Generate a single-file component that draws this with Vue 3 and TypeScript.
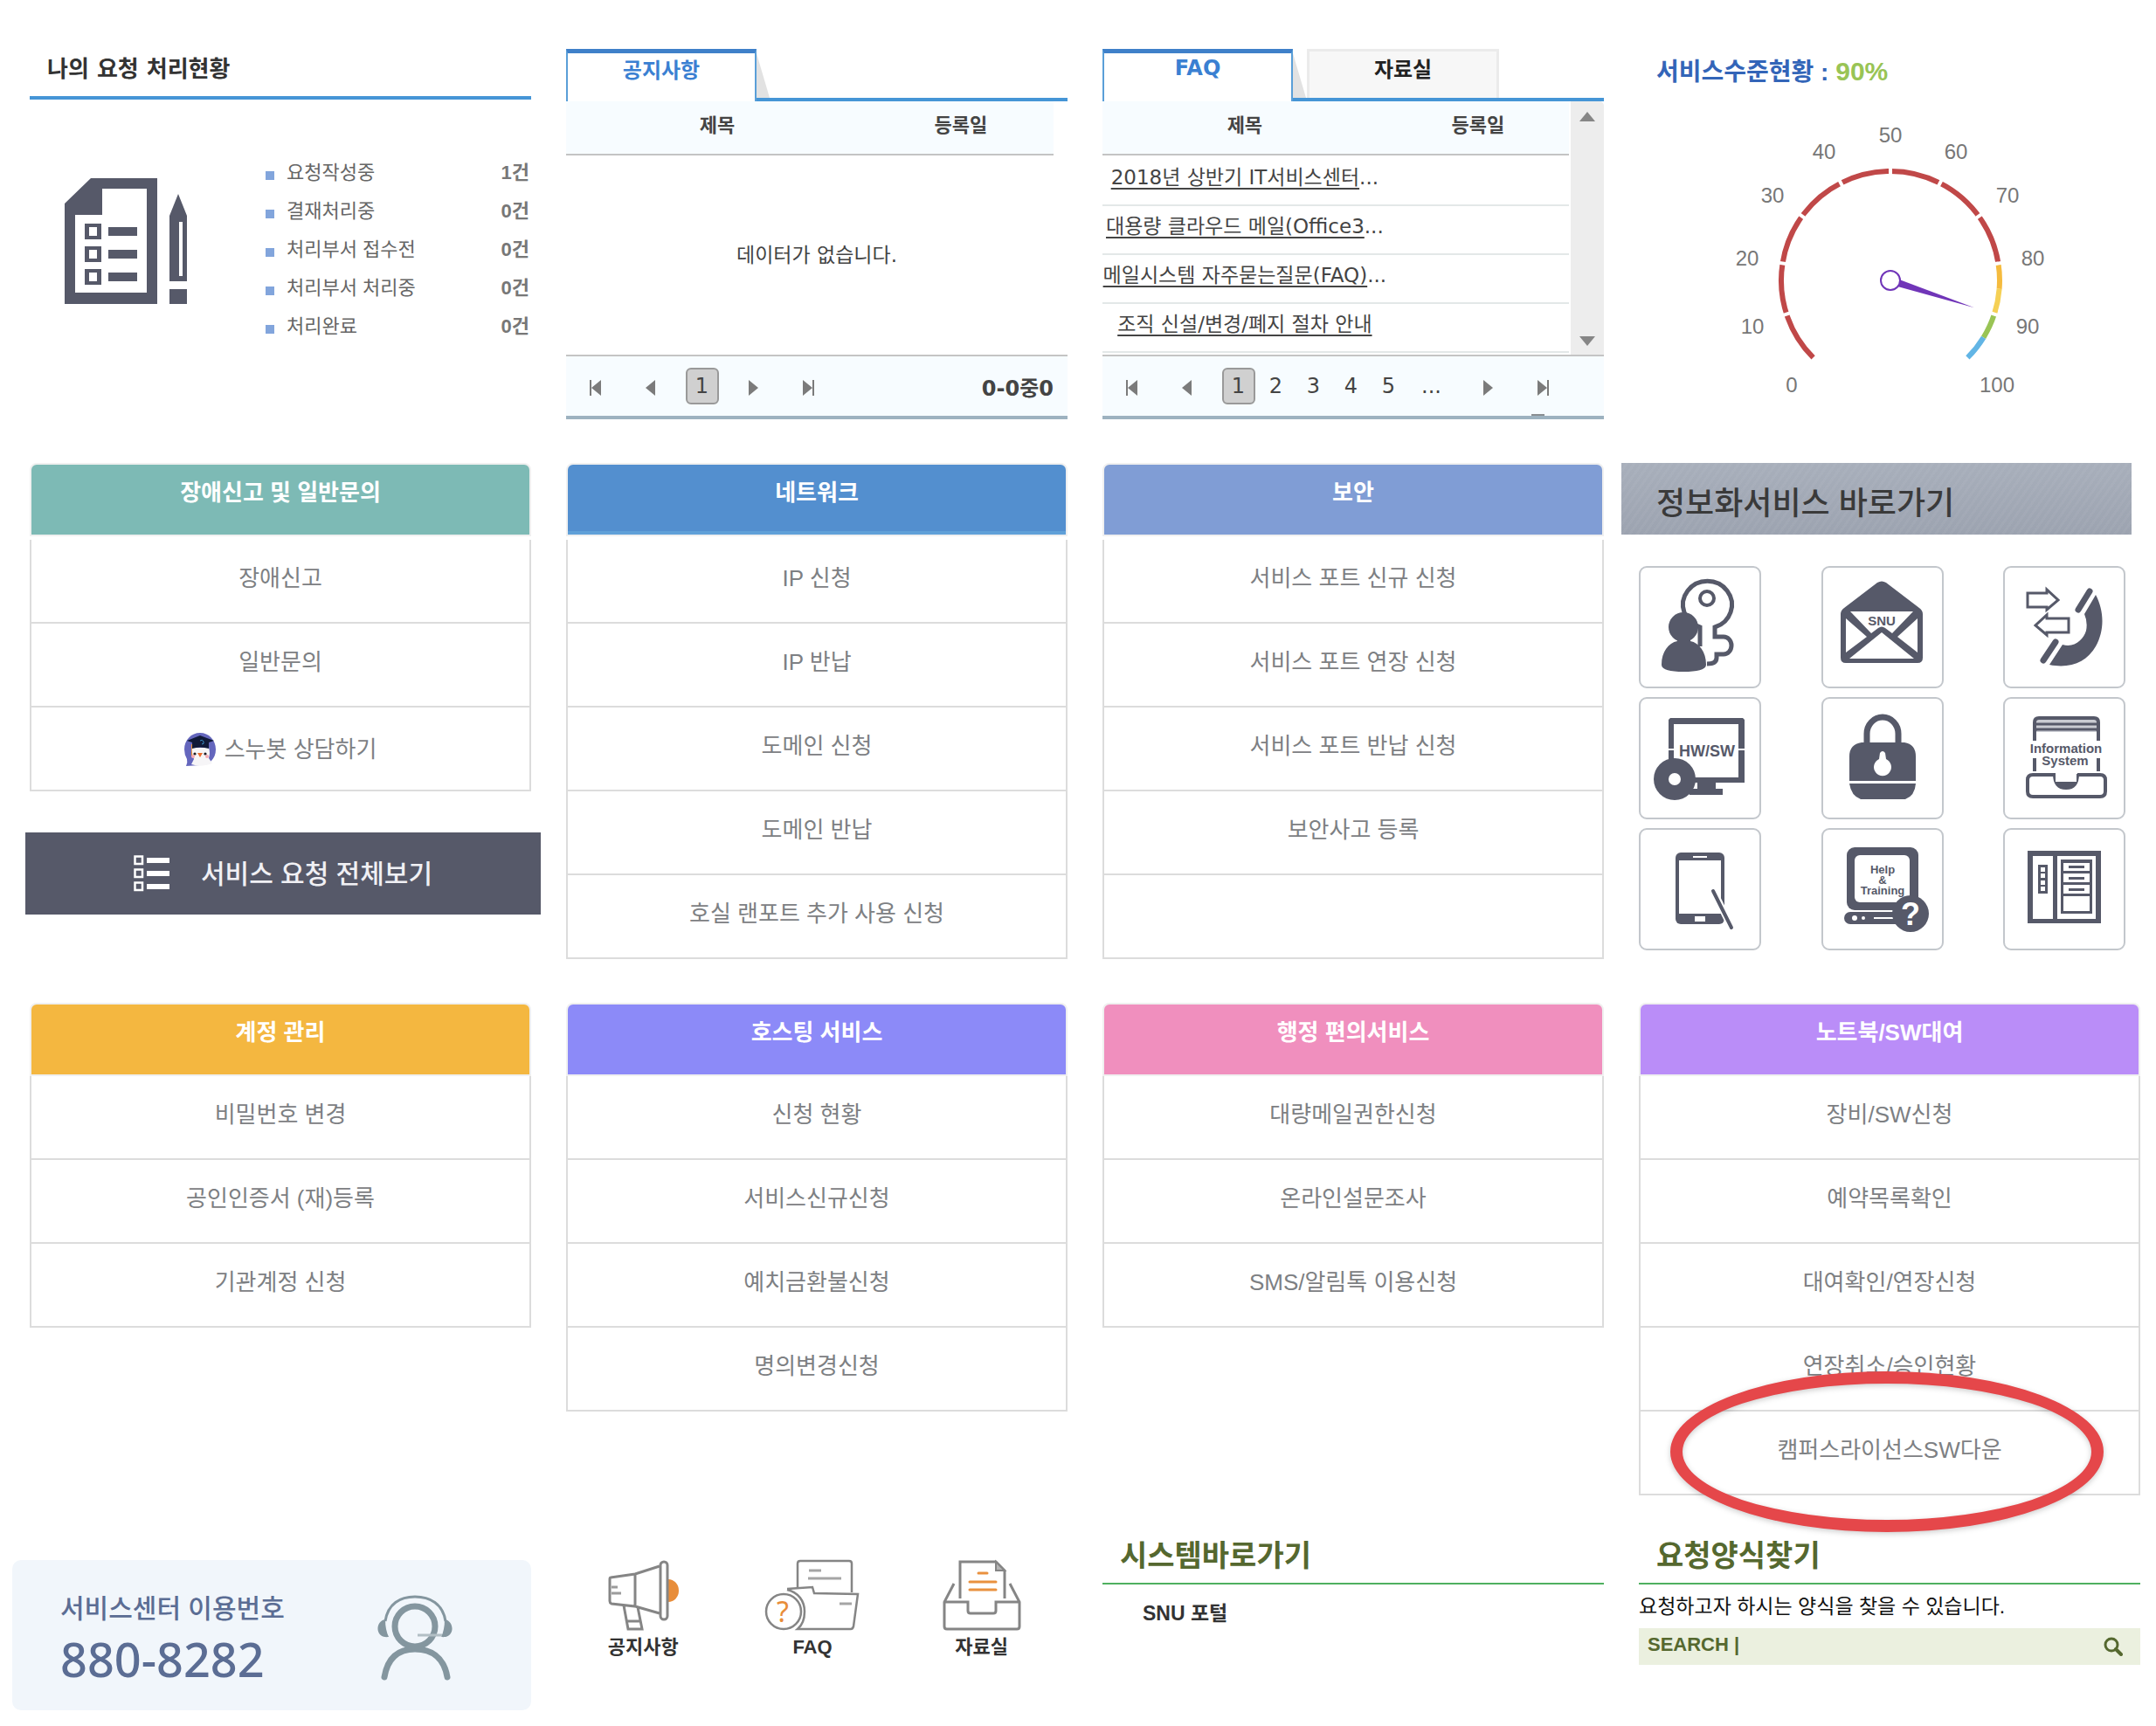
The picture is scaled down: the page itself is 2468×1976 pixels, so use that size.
<script setup lang="ts">
import { ref } from 'vue'

interface MenuItem {
  label: string
  bot?: boolean
  marked?: boolean
}

interface MenuCard {
  title: string
  tone: string
  items: MenuItem[]
}

const toItems = (...labels: string[]): MenuItem[] => labels.map((label) => ({ label }))

const requestStatus = [
  { label: '요청작성중', count: 1 },
  { label: '결재처리중', count: 0 },
  { label: '처리부서 접수전', count: 0 },
  { label: '처리부서 처리중', count: 0 },
  { label: '처리완료', count: 0 },
]

const faqRows = [
  { title: '2018년 상반기 IT서비스센터', cut: true },
  { title: '대용량 클라우드 메일(Office3', cut: true },
  { title: '메일시스템 자주묻는질문(FAQ)', cut: true },
  { title: '조직 신설/변경/폐지 절차 안내', cut: false },
]

const helpCard: MenuCard = {
  title: '장애신고 및 일반문의',
  tone: 'teal',
  items: [{ label: '장애신고' }, { label: '일반문의' }, { label: '스누봇 상담하기', bot: true }],
}

const upperCards: MenuCard[] = [
  {
    title: '네트워크',
    tone: 'blue',
    items: toItems('IP 신청', 'IP 반납', '도메인 신청', '도메인 반납', '호실 랜포트 추가 사용 신청'),
  },
  {
    title: '보안',
    tone: 'steel',
    items: toItems('서비스 포트 신규 신청', '서비스 포트 연장 신청', '서비스 포트 반납 신청', '보안사고 등록', ''),
  },
]

const lowerCards: MenuCard[] = [
  { title: '계정 관리', tone: 'amber', items: toItems('비밀번호 변경', '공인인증서 (재)등록', '기관계정 신청') },
  {
    title: '호스팅 서비스',
    tone: 'violet',
    items: toItems('신청 현황', '서비스신규신청', '예치금환불신청', '명의변경신청'),
  },
  {
    title: '행정 편의서비스',
    tone: 'pink',
    items: toItems('대량메일권한신청', '온라인설문조사', 'SMS/알림톡 이용신청'),
  },
  {
    title: '노트북/SW대여',
    tone: 'purple',
    items: [
      ...toItems('장비/SW신청', '예약목록확인', '대여확인/연장신청', '연장취소/승인현황'),
      { label: '캠퍼스라이선스SW다운', marked: true },
    ],
  },
]

// Gauge geometry: 270 degree sweep, value 0 at the lower left.
const CX = 288
const CY = 240
const R = 125
const point = (value: number, radius: number) => {
  const a = ((-135 + value * 2.7) * Math.PI) / 180
  return { x: CX + radius * Math.sin(a), y: CY - radius * Math.cos(a) }
}
const arc = (from: number, to: number) => {
  const a = point(from, R)
  const b = point(to, R)
  return `M${a.x} ${a.y}A${R} ${R} 0 ${to - from > 66 ? 1 : 0} 1 ${b.x} ${b.y}`
}
const bands = [
  { d: arc(0, 80), color: '#c04848' },
  { d: arc(80, 85), color: '#f5bb3e' },
  { d: arc(85, 90), color: '#f5d055' },
  { d: arc(90, 95), color: '#99c455' },
  { d: arc(95, 100), color: '#62b5e5' },
]
const ticks = [10, 20, 30, 40, 50, 60, 70, 80, 90].map((v) => ({ a: point(v, 118), b: point(v, 132) }))
const gaugeLabels = [
  { v: 0, x: 175, y: 360 },
  { v: 10, x: 130, y: 293 },
  { v: 20, x: 124, y: 215 },
  { v: 30, x: 153, y: 143 },
  { v: 40, x: 212, y: 93 },
  { v: 50, x: 288, y: 74 },
  { v: 60, x: 363, y: 93 },
  { v: 70, x: 422, y: 143 },
  { v: 80, x: 451, y: 215 },
  { v: 90, x: 445, y: 293 },
  { v: 100, x: 410, y: 360 },
]

const keyword = ref('')
</script>

<template>
  <main class="portal">
    <section class="status">
      <h2 class="status-title">나의 요청 처리현황</h2>
      <div class="status-body">
        <svg class="status-icon" viewBox="0 0 140 144" aria-hidden="true">
          <path fill="#565969" fill-rule="evenodd" d="M30 0H106V144H0V29ZM43 12V42H12V131H94V12Z" />
          <path
            fill="#565969"
            fill-rule="evenodd"
            d="M23 52H42V70H23ZM28 56V66H37V56ZM23 78H42V96H23ZM28 82V92H37V82ZM23 104H42V122H23ZM28 108V118H37V108ZM50 56H83V66H50ZM50 82H83V92H50ZM50 108H83V118H50Z"
          />
          <path
            fill="#565969"
            fill-rule="evenodd"
            d="M130 18L140 43V118H120V43ZM131 50V112H135V50ZM120 127H140V144H120Z"
          />
        </svg>
        <ul class="status-list">
          <li v-for="row in requestStatus" :key="row.label">
            <a href="#">{{ row.label }}</a>
            <strong>{{ row.count }}건</strong>
          </li>
        </ul>
      </div>
    </section>

    <section class="board">
      <div class="tabs" role="tablist">
        <button class="tab active" type="button" role="tab" aria-selected="true">공지사항</button>
      </div>
      <div class="board-body">
        <table class="grid notice">
          <thead>
            <tr>
              <th class="col-title">제목</th>
              <th>등록일</th>
            </tr>
          </thead>
        </table>
        <p class="empty">데이터가 없습니다.</p>
      </div>
      <nav class="pager" aria-label="공지사항">
        <button type="button" class="step" aria-label="처음">
          <svg viewBox="0 0 13 18"><path d="M0 0H2V18H0ZM13 0V18L2 9Z" /></svg>
        </button>
        <button type="button" class="step" aria-label="이전">
          <svg viewBox="0 0 13 18"><path d="M12 0V18L1 9Z" /></svg>
        </button>
        <div class="pages">
          <button type="button" class="page"><span class="current">1</span></button>
        </div>
        <button type="button" class="step" aria-label="다음">
          <svg viewBox="0 0 13 18"><path d="M1 0V18L12 9Z" /></svg>
        </button>
        <button type="button" class="step" aria-label="마지막">
          <svg viewBox="0 0 13 18"><path d="M11 0H13V18H11ZM0 0V18L11 9Z" /></svg>
        </button>
        <span class="total">0-0중0</span>
      </nav>
    </section>

    <section class="board">
      <div class="tabs" role="tablist">
        <button class="tab active" type="button" role="tab" aria-selected="true">FAQ</button>
        <button class="tab" type="button" role="tab" aria-selected="false">자료실</button>
      </div>
      <div class="board-body scrolling">
        <table class="grid">
          <thead>
            <tr>
              <th class="col-title">제목</th>
              <th>등록일</th>
            </tr>
          </thead>
          <tbody>
            <tr v-for="row in faqRows" :key="row.title">
              <td><a href="#">{{ row.title }}</a><span v-if="row.cut">...</span></td>
              <td></td>
            </tr>
          </tbody>
        </table>
        <div class="scrollbar" aria-hidden="true">
          <svg viewBox="0 0 18 11"><path d="M9 0L18 11H0Z" /></svg>
          <svg viewBox="0 0 18 11"><path d="M0 0H18L9 11Z" /></svg>
        </div>
      </div>
      <nav class="pager clipped" aria-label="FAQ">
        <button type="button" class="step" aria-label="처음">
          <svg viewBox="0 0 13 18"><path d="M0 0H2V18H0ZM13 0V18L2 9Z" /></svg>
        </button>
        <button type="button" class="step" aria-label="이전">
          <svg viewBox="0 0 13 18"><path d="M12 0V18L1 9Z" /></svg>
        </button>
        <div class="pages">
          <button type="button" class="page"><span class="current">1</span></button>
          <button v-for="n in [2, 3, 4, 5]" :key="n" type="button" class="page">{{ n }}</button>
          <button type="button" class="page more">...</button>
        </div>
        <button type="button" class="step" aria-label="다음">
          <svg viewBox="0 0 13 18"><path d="M1 0V18L12 9Z" /></svg>
        </button>
        <button type="button" class="step" aria-label="마지막">
          <svg viewBox="0 0 13 18"><path d="M11 0H13V18H11ZM0 0V18L11 9Z" /></svg>
        </button>
      </nav>
    </section>

    <section class="level">
      <h2 class="level-title">서비스수준현황 : <em>90%</em></h2>
      <svg class="gauge" viewBox="0 0 574 376" role="img" aria-label="90%">
        <path v-for="b in bands" :key="b.color" :d="b.d" :stroke="b.color" stroke-width="6" fill="none" />
        <line
          v-for="(t, i) in ticks"
          :key="i"
          :x1="t.a.x"
          :y1="t.a.y"
          :x2="t.b.x"
          :y2="t.b.y"
          stroke="#fff"
          stroke-width="4"
        />
        <g transform="rotate(18 288 240)">
          <path d="M298 236L389 240L298 244Z" fill="#7035b8" />
        </g>
        <circle cx="288" cy="240" r="11" fill="#fff" stroke="#7035b8" stroke-width="2" />
        <text v-for="l in gaugeLabels" :key="l.v" :x="l.x" :y="l.y + 8" text-anchor="middle">{{ l.v }}</text>
      </svg>
    </section>

    <div class="help">
      <section class="card spaced">
        <h3 class="card-title" :class="helpCard.tone">{{ helpCard.title }}</h3>
        <ul>
          <li v-for="item in helpCard.items" :key="item.label">
            <a href="#" :class="{ bot: item.bot }">
              <svg v-if="item.bot" viewBox="0 0 36 38" aria-hidden="true">
                <path fill="#6466bd" d="M18 0C28 0 36 8 36 19S28 37 18 37L2 38Q4 34 3 30Q0 25 0 19C0 8 8 0 18 0Z" />
                <path fill="#f1902f" d="M8 13H11V27H8Z" />
                <path fill="#f6f5f7" d="M9 17H28Q30 23 28 29L32 35Q19 40 8 36L11 30Q8 24 9 17Z" />
                <path fill="#101938" d="M3 9L18 3L34 9L28 11V18Q18 15 9 18V11Z" />
                <circle cx="12" cy="24" r="1.6" fill="#1d1d25" />
                <circle cx="24" cy="24" r="1.6" fill="#1d1d25" />
                <circle cx="10" cy="27" r="2" fill="#f5aab4" />
                <circle cx="26" cy="27" r="2" fill="#f5aab4" />
                <path fill="#e9692c" d="M15 23H21L18 28Z" />
                <path fill="none" stroke="#3b8fc4" d="M18 9Q21 7 22 10T20 13" />
              </svg>
              <span>{{ item.label }}</span>
            </a>
          </li>
        </ul>
      </section>
      <button class="view-all" type="button">
        <svg viewBox="0 0 41 42" aria-hidden="true">
          <path
            fill="none"
            stroke="#fff"
            stroke-width="2.5"
            d="M1.5 1.5H10V10H1.5ZM1.5 16.5H10V25H1.5ZM1.5 31.5H10V40H1.5Z"
          />
          <path fill="#fff" d="M15 3H41V9H15ZM15 18H41V24H15ZM15 33H41V39H15Z" />
        </svg>
        <span>서비스 요청 전체보기</span>
      </button>
    </div>

    <section v-for="card in upperCards" :key="card.title" class="card spaced">
      <h3 class="card-title" :class="card.tone">{{ card.title }}</h3>
      <ul>
        <li v-for="item in card.items" :key="item.label">
          <a v-if="item.label" href="#">{{ item.label }}</a>
        </li>
      </ul>
    </section>

    <section class="shortcuts">
      <h2 class="banner">정보화서비스 바로가기</h2>
      <div class="tiles">
        <a class="tile" href="#" aria-label="계정">
          <svg viewBox="0 0 140 140">
            <path
              class="line"
              stroke-width="5"
              d="M70 92V70A28 27 0 1 1 87 70V81H97A9 10 0 0 1 97 101H89V105Q89 112 78 112"
            />
            <circle class="line" cx="78" cy="37" r="8" stroke-width="4" />
            <circle cx="51" cy="70" r="17" />
            <path d="M26 113C26 98 34 88 44 86V80H59V86C69 88 77 98 77 113Q77 121 51 121Q26 121 26 113Z" />
          </svg>
        </a>
        <a class="tile" href="#" aria-label="메일">
          <svg viewBox="0 0 140 140">
            <path
              d="M22 55Q22 51 26 48L64 19Q69 16 74 19L112 48Q116 51 116 55V105Q116 111 110 111H28Q22 111 22 105Z"
            />
            <path
              class="hole"
              d="M33 52H105L81 77L73 71Q69 68 65 71L57 77ZM28 60L52 81L28 99ZM110 60L87 81L110 99ZM69 76L106 106H32Z"
            />
            <text x="69" y="68" font-size="15">SNU</text>
          </svg>
        </a>
        <a class="tile" href="#" aria-label="전화">
          <svg viewBox="0 0 140 140">
            <path class="line" stroke-width="3" d="M28 31H50V27L63 39L50 50V47H28Z" />
            <path class="line" stroke-width="3" d="M75 60H50V56L37 68L50 79V76H75Z" />
            <path class="line" stroke-width="7" stroke-linecap="round" d="M99 29L86 50M60 87L46 108" />
            <path
              d="M106 33C116 52 116 74 106 92C96 110 76 118 53 113L68 90C82 94 92 84 95 74Q97 64 93 55Z"
            />
          </svg>
        </a>
        <a class="tile" href="#" aria-label="HW/SW">
          <svg viewBox="0 0 140 140">
            <path fill-rule="evenodd" d="M36 24H119L121 26V98H34V26ZM40 31V92H114V31Z" />
            <path class="hole" d="M33 59H41V61H33ZM113 59H122V61H113Z" />
            <path d="M67 98H88V105H96V112H58V105H67Z" />
            <circle cx="41" cy="94" r="24" />
            <circle class="hole" cx="41" cy="94" r="7" />
            <text x="78" y="68" font-size="18">HW/SW</text>
          </svg>
        </a>
        <a class="tile" href="#" aria-label="보안">
          <svg viewBox="0 0 140 140">
            <path class="line" stroke-width="7" d="M52 56V42A18 19 0 0 1 88 42V56" />
            <path d="M46 52H95Q108 54 108 68V96H32V68Q32 54 46 52ZM32 99H108Q107 113 96 117H45Q34 113 32 99Z" />
            <path class="hole" d="M67 64Q70 60 73 64L74 71A10 10 0 1 1 66 71Z" />
          </svg>
        </a>
        <a class="tile" href="#" aria-label="Information System">
          <svg viewBox="0 0 140 140">
            <path fill="#c9cbd2" d="M38 25H107V40H38Z" />
            <path class="line" stroke-width="4" d="M36 50V29Q36 24 41 24H104Q109 24 109 29V50M36 70V85M109 70V85" />
            <path class="line" stroke-width="3" d="M37 31H108M37 39V37H108V39" />
            <path
              class="line"
              stroke-width="4"
              d="M60 89H34Q28 89 28 95V108Q28 114 34 114H111Q117 114 117 108V95Q117 89 111 89H85"
            />
            <path d="M57 88C57 100 62 106 72 106S87 100 87 88H84V97H60V88Z" />
            <text x="72" y="64" font-size="15">Information</text>
            <text x="71" y="78" font-size="15">System</text>
          </svg>
        </a>
        <a class="tile" href="#" aria-label="모바일">
          <svg viewBox="0 0 140 140">
            <rect x="42" y="28" width="56" height="82" rx="6" />
            <path class="hole" d="M46 37H94V98H46ZM64 101H76V107H64ZM62 32H78V34H62Z" />
            <path stroke="#fff" stroke-width="8" d="M85 71L106 114" />
            <path class="line" stroke-width="4" stroke-linecap="round" d="M85 72L106 114" />
          </svg>
        </a>
        <a class="tile" href="#" aria-label="Help &amp; Training">
          <svg viewBox="0 0 140 140">
            <rect x="29" y="22" width="82" height="72" rx="9" />
            <rect class="hole" x="38" y="31" width="63" height="54" rx="6" />
            <rect x="26" y="96" width="70" height="14" rx="7" />
            <circle class="hole" cx="38" cy="103" r="3" />
            <circle class="hole" cx="48" cy="103" r="2" />
            <path class="hole" d="M60 102H84V104H60Z" />
            <text x="70" y="52" font-size="13">Help</text>
            <text x="70" y="64" font-size="13">&amp;</text>
            <text x="70" y="76" font-size="13">Training</text>
            <circle cx="102" cy="98" r="21" />
            <text class="hole" x="102" y="111" font-size="36">?</text>
          </svg>
        </a>
        <a class="tile" href="#" aria-label="서버">
          <svg viewBox="0 0 140 140">
            <path
              fill-rule="evenodd"
              d="M28 26H112V109H28ZM34 32V104H57V32ZM62 32V104H106V32ZM40 42H51V75H40ZM43 45V50H48V45ZM43 52V57H48V52ZM43 60V65H48V60ZM43 67V72H48V67ZM66 36H102V98H66ZM69 40V49H99V40ZM69 52V62H99V52ZM69 65V75H99V65ZM69 78V95H99V78ZM75 43H93V46H75ZM75 56H93V59H75ZM75 69H93V72H75Z"
            />
          </svg>
        </a>
      </div>
    </section>

    <section v-for="card in lowerCards" :key="card.title" class="card">
      <h3 class="card-title" :class="card.tone">{{ card.title }}</h3>
      <ul>
        <li v-for="item in card.items" :key="item.label">
          <a href="#">{{ item.label }}</a>
          <span v-if="item.marked" class="marker" aria-hidden="true"></span>
        </li>
      </ul>
    </section>

    <section class="phone">
      <div>
        <p class="phone-label">서비스센터 이용번호</p>
        <p class="phone-number">880-8282</p>
      </div>
      <svg viewBox="0 0 86 98" aria-hidden="true" fill="none" stroke="#84969f">
        <path stroke-width="3" d="M9 30C12 10 26 2 43 2S75 10 78 30" />
        <path fill="#84969f" stroke="none" d="M13 48C-3 50 -3 30 9 28Q9 40 13 48ZM73 48C89 50 89 30 77 28Q77 40 73 48Z" />
        <circle cx="43" cy="36" r="23" stroke-width="7" />
        <path stroke="#b2bfc5" stroke-width="3" d="M46 46H74" />
        <path stroke-width="7" stroke-linecap="round" d="M8 94C12 70 26 62 43 62S76 70 80 94" />
      </svg>
    </section>

    <nav class="quick" aria-label="게시판">
      <a href="#">
        <svg viewBox="0 0 80 80" width="80" height="80" fill="none" stroke="#858585" stroke-width="3">
          <path fill="#e88d3a" stroke="none" d="M69 22A12 13 0 0 1 69 48Z" />
          <rect x="60" y="2" width="8" height="66" rx="4" />
          <path d="M31 16L3 20Q2 20 2 22V47Q2 49 4 50L31 53ZM31 16L59 7M31 53L59 61M18 52L23 79H39L34 54M22 70H38" />
          <path stroke="#9c9c9c" d="M4 31H11M4 38H15" />
        </svg>
        <span>공지사항</span>
      </a>
      <a href="#">
        <svg viewBox="0 0 108 80" width="108" height="80" fill="none" stroke="#858585" stroke-width="2.5">
          <path d="M37 32V4Q37 1 40 1H96Q99 1 99 4V37" />
          <path stroke="#a5a5a5" stroke-width="3" d="M50 12H64M49 21H87M85 50H99" />
          <path d="M25 33L54 31L56 38L106 39L101 76Q100 79 98 79H37C43 74 45 67 45 59C45 47 38 37 25 34" />
          <circle cx="21" cy="59" r="20" />
          <text x="20" y="71" text-anchor="middle">?</text>
        </svg>
        <span>FAQ</span>
      </a>
      <a href="#">
        <svg viewBox="0 0 90 80" width="90" height="80" fill="none" stroke="#858585" stroke-width="3">
          <path d="M20 44V2H61L71 12V44" />
          <path fill="#b5b5b5" stroke-width="2" d="M61 2V12H71Z" />
          <path d="M13 27L2 48V76Q2 79 5 79H85Q88 79 88 76V48L77 27M2 48H29V58Q29 61 32 61H58Q61 61 61 58V48H88" />
          <path stroke="#e9913f" stroke-linecap="round" d="M41 15H51M31 25H61M31 34H61" />
        </svg>
        <span>자료실</span>
      </a>
    </nav>

    <section>
      <h2 class="foot-title">시스템바로가기</h2>
      <a class="system-link" href="#">SNU 포털</a>
    </section>

    <section>
      <h2 class="foot-title">요청양식찾기</h2>
      <label class="form-hint" for="form-search">요청하고자 하시는 양식을 찾을 수 있습니다.</label>
      <form class="search" @submit.prevent>
        <input id="form-search" v-model="keyword" type="text" placeholder="SEARCH |" />
        <button type="submit" aria-label="검색">
          <svg viewBox="0 0 22 22" fill="none" stroke="#55682f">
            <circle cx="9" cy="9" r="7" stroke-width="3" />
            <path d="M14 14L20 20" stroke-width="4" stroke-linecap="round" />
          </svg>
        </button>
      </form>
    </section>
  </main>
</template>

<style>
body {
  margin: 0;
  background: #fff;
}
</style>

<style scoped>
.portal {
  display: grid;
  grid-template-columns: repeat(4, minmax(0, 1fr));
  gap: 50px 40px;
  padding: 56px 18px 16px 34px;
  font-family: 'Liberation Sans', 'Noto Sans CJK KR', sans-serif;
  color: #444;
}
h2,
h3,
p,
ul {
  margin: 0;
  padding: 0;
  list-style: none;
}
a {
  color: inherit;
  text-decoration: none;
}
button {
  padding: 0;
  border: 0;
  background: none;
  font: inherit;
  color: inherit;
}
svg {
  display: block;
  flex: none;
}

/* request status */
.status-title {
  padding: 0 0 8px 20px;
  border-bottom: 4px solid #4595d6;
  font-family: 'DejaVu Sans', 'Noto Sans CJK KR', sans-serif;
  font-size: 26px;
  line-height: 46px;
  color: #333;
}
.status-body {
  display: flex;
  align-items: flex-start;
  gap: 90px;
  padding: 62px 2px 0 40px;
}
.status-icon {
  width: 140px;
  margin-top: 28px;
}
.status-list {
  flex: 1;
  font-size: 22px;
  line-height: 44px;
  color: #666;
}
.status-list li {
  display: flex;
  align-items: center;
}
.status-list li::before {
  content: '';
  width: 10px;
  height: 10px;
  margin: 6px 14px 0 0;
  background: #82a5dc;
}
.status-list strong {
  margin-left: auto;
  color: #777;
}

/* boards */
.board {
  display: flex;
  flex-direction: column;
  font-family: 'DejaVu Sans', 'Noto Sans CJK KR', sans-serif;
}
.tabs {
  display: flex;
  gap: 16px;
  height: 60px;
  box-shadow: inset 0 -4px #4595d6;
}
.tab {
  box-sizing: border-box;
  width: 220px;
  height: 56px;
  padding-bottom: 16px;
  border: 3px solid #ebebeb;
  border-bottom: 0;
  background: #f7f7f7;
  font-size: 24px;
  font-weight: bold;
  color: #222;
}
.tab.active {
  position: relative;
  width: 218px;
  height: 60px;
  padding-bottom: 22px;
  border: 2px solid #5a9fd8;
  border-top: 5px solid #3f80c9;
  border-bottom: 0;
  background: #fff;
  color: #3a80d2;
}
.tab.active::after {
  content: '';
  position: absolute;
  top: 0;
  right: -17px;
  width: 15px;
  height: 51px;
  background: #e2e2e2;
  clip-path: polygon(0 0, 100% 100%, 0 100%);
}
.board-body {
  height: 290px;
  overflow: hidden;
}
.scrolling {
  display: flex;
  align-items: stretch;
  gap: 2px;
}
.grid {
  flex: 1;
  align-self: flex-start;
  width: 100%;
  border-spacing: 0;
  table-layout: fixed;
  font-size: 23px;
  text-align: center;
  white-space: nowrap;
}
.notice {
  width: calc(100% - 16px);
}
.col-title {
  width: 61%;
}
.notice .col-title {
  width: 62%;
}
th {
  padding: 0 0 4px;
  border-bottom: 2px solid #c4c4c4;
  background: #f7fcff;
  font-size: 22px;
  line-height: 56px;
}
td {
  padding: 0 0 8px;
  border-bottom: 2px solid #e3e8e8;
  line-height: 46px;
}
tr:first-child td {
  padding-top: 2px;
}
td a {
  text-decoration: underline;
  text-decoration-thickness: 2px;
  text-underline-offset: 4px;
}
.empty {
  font-size: 23px;
  line-height: 228px;
  text-align: center;
}
.scrollbar {
  display: flex;
  flex-direction: column;
  align-items: center;
  justify-content: space-between;
  width: 38px;
  box-sizing: border-box;
  padding: 12px 0 10px;
  border-radius: 0 5px 0 0;
  background: #ededed;
}
.scrollbar svg {
  width: 18px;
  fill: #868686;
}
.pager {
  position: relative;
  display: flex;
  align-items: center;
  height: 68px;
  padding: 0 16px 0 2px;
  border-top: 2px solid #c4c4c4;
  border-bottom: 4px solid #9db2c0;
  background: #f7fcff;
  font-size: 24px;
}
.clipped::after {
  content: '';
  position: absolute;
  right: 68px;
  bottom: 0;
  width: 15px;
  height: 2px;
  background: #8a8f92;
}
.step {
  display: flex;
  justify-content: center;
  width: 63px;
  padding-top: 4px;
}
.step svg {
  width: 13px;
  fill: #7b7b7b;
}
.pages {
  display: flex;
  align-items: center;
  margin: 0 6px;
}
.page {
  display: flex;
  justify-content: center;
  width: 43px;
  line-height: 38px;
}
.page.more {
  width: 55px;
}
.current {
  width: 34px;
  border: 2px solid #999;
  border-radius: 6px;
  background: #d0d0d0;
}
.total {
  margin-left: auto;
  font-weight: bold;
}

/* service level */
.level-title {
  padding-left: 20px;
  font-size: 28px;
  line-height: 52px;
  color: #3365b8;
}
.level-title em {
  font-style: normal;
  font-size: 30px;
  color: #99c455;
}
.gauge {
  width: 100%;
  margin-top: -28px;
  font-size: 24px;
  fill: #777;
}

/* menu cards */
.card-title {
  padding-bottom: 16px;
  border: 2px solid #f0f0f0;
  border-radius: 8px 8px 0 0;
  font-size: 26px;
  line-height: 64px;
  text-align: center;
  color: #fff;
}
.spaced .card-title {
  margin-bottom: 4px;
}
.card ul {
  border: solid #dcdcdc;
  border-width: 0 2px;
  font-size: 26px;
  color: #7d8083;
}
.card li {
  position: relative;
  height: 94px;
  border-bottom: 2px solid #dcdcdc;
  text-align: center;
}
.card li a {
  display: block;
  line-height: 88px;
}
.card li .bot {
  display: flex;
  align-items: center;
  justify-content: center;
  gap: 10px;
  line-height: 96px;
}
.bot svg {
  width: 36px;
}
.teal {
  background: #7dbab5;
}
.blue {
  background: linear-gradient(#538fcf, #538fcf) top / 100% calc(100% - 4px) no-repeat #60a0d8;
}
.steel {
  background: #809dd5;
}
.amber {
  background: #f4b740;
}
.violet {
  background: #8c8af8;
}
.pink {
  background: #f08fbe;
}
.purple {
  background: #ba8df8;
}
.marker {
  position: absolute;
  top: -46px;
  left: 6%;
  box-sizing: border-box;
  width: 87%;
  height: 184px;
  border: 14px solid #e5474a;
  border-radius: 50%;
  filter: drop-shadow(0 2px 3px rgb(0 0 0 / 20%));
  pointer-events: none;
}
.view-all {
  display: flex;
  align-items: center;
  justify-content: center;
  gap: 36px;
  width: calc(100% + 16px);
  height: 94px;
  margin: 47px 0 0 -5px;
  background: #565969;
  font-size: 30px;
  font-weight: 500;
  color: #f0f0f4;
}
.view-all svg {
  width: 41px;
}
.view-all span {
  padding-bottom: 4px;
}

/* shortcuts */
.banner {
  margin: 0 10px 0 -20px;
  padding: 12px 0 0 40px;
  background:
    repeating-linear-gradient(125deg, rgb(255 255 255 / 0) 0 4px, rgb(255 255 255 / 4%) 4px 7px),
    linear-gradient(#a8afbb, #9ca3b0);
  font-size: 36px;
  font-weight: 500;
  line-height: 70px;
  color: #3a3a3a;
}
.tiles {
  display: grid;
  grid-template-columns: repeat(3, 140px);
  justify-content: space-between;
  gap: 10px;
  padding: 36px 17px 0 0;
}
.tile {
  box-sizing: border-box;
  height: 140px;
  border: 2px solid #c3c7cc;
  border-radius: 9px;
}
.tile svg {
  width: 140px;
  margin: -2px;
  fill: #565969;
}
.tile text {
  font-weight: bold;
  text-anchor: middle;
}
.tile .line {
  fill: none;
  stroke: #565969;
}
.tile .hole {
  fill: #fff;
}

/* footer row */
.phone {
  display: flex;
  align-items: center;
  justify-content: space-between;
  align-self: start;
  box-sizing: border-box;
  height: 172px;
  margin: 24px 0 0 -20px;
  padding: 6px 90px 0 55px;
  border-radius: 10px;
  background: #f1f6fb;
  color: #5b6d94;
}
.phone svg {
  width: 86px;
}
.phone-label {
  font-size: 30px;
  font-weight: 500;
  line-height: 48px;
}
.phone-number {
  font-family: 'Noto Sans', sans-serif;
  font-size: 54px;
  font-weight: 500;
  line-height: 66px;
}
.quick {
  display: grid;
  grid-template-columns: repeat(3, minmax(0, 1fr));
  gap: 17px;
  padding: 24px 10px 0 0;
  font-size: 22px;
  font-weight: bold;
  color: #333;
}
.quick a {
  display: flex;
  flex-direction: column;
  align-items: center;
  line-height: 40px;
}
.quick svg {
  overflow: visible;
}
.quick text {
  font-family: 'Noto Sans', sans-serif;
  font-size: 32px;
  font-weight: 400;
  fill: #e88d3a;
  stroke: none;
}
.foot-title {
  padding: 0 0 12px 20px;
  border-bottom: 2px solid #4fb05f;
  font-size: 34px;
  line-height: 38px;
  color: #55682f;
}
.system-link {
  display: block;
  padding-left: 46px;
  font-size: 23px;
  font-weight: bold;
  line-height: 66px;
  color: #333;
}
.form-hint {
  display: block;
  font-size: 23px;
  line-height: 50px;
  color: #111;
}
.search {
  display: flex;
  align-items: center;
  height: 42px;
  padding: 0 20px 0 10px;
  background: #ebf0df;
}
.search input {
  flex: 1;
  min-width: 0;
  padding: 0 0 4px;
  border: 0;
  outline: 0;
  background: none;
  font: bold 22px 'Liberation Sans', 'Noto Sans CJK KR', sans-serif;
  color: #55682f;
}
.search input::placeholder {
  color: #55682f;
  opacity: 1;
}
.search svg {
  width: 22px;
}
</style>
